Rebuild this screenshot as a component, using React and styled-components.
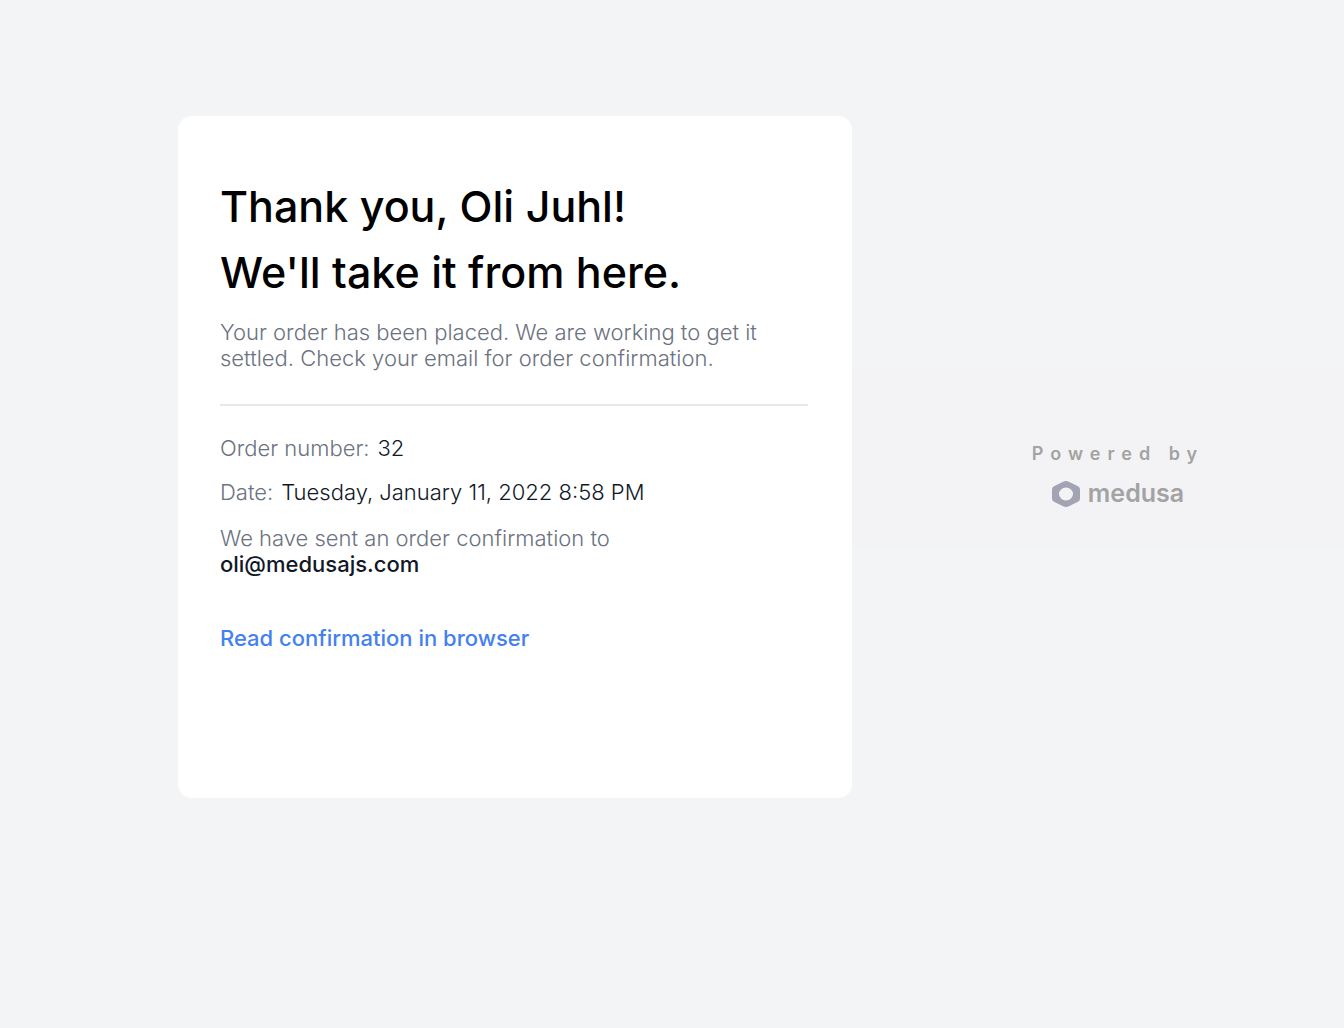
import styled, { createGlobalStyle } from "styled-components";

const GlobalStyle = createGlobalStyle`
  *, *::before, *::after {
    box-sizing: border-box;
  }

  body {
    margin: 0;
    background: #f3f4f6;
    color: #111827;
    font-family: Inter, "Liberation Sans", sans-serif;
    font-size: 22px;
    font-weight: 300;
    line-height: 26px;
  }
`;

const Page = styled.main`
  display: grid;
  grid-template-columns: 1.37fr 1fr;
  align-items: center;
  padding: 116px 0 116px 178px;
`;

const Card = styled.section`
  background: #ffffff;
  border-radius: 14px;
  padding: 57px 44px 147px 42px;
`;

const Title = styled.h1`
  margin: 0;
  color: #000000;
  font-size: 43px;
  font-weight: 500;
  line-height: 66px;
`;

const TitleLine = styled.span`
  display: block;
`;

const Text = styled.p`
  margin: ${(props) => props.$top}px 0 0;
  color: #6b7280;
`;

const Divider = styled.hr`
  height: 2px;
  margin: 33px 0 29px;
  border: none;
  background: #e5e7eb;
`;

const Details = styled.dl`
  display: flex;
  flex-direction: column;
  gap: 18px;
  margin: 0;
`;

const DetailRow = styled.div`
  display: flex;
  gap: 8px;
`;

const Label = styled.dt`
  color: #6b7280;
`;

const Value = styled.dd`
  margin: 0;
  color: #111827;
`;

const Email = styled.span`
  display: block;
  color: #111827;
  font-weight: 500;
`;

const ReadLink = styled.a`
  display: inline-block;
  margin-top: 48px;
  color: #4580f0;
  font-weight: 500;
  text-decoration: none;

  &:hover {
    text-decoration: underline;
  }
`;

const Powered = styled.aside`
  display: flex;
  flex-direction: column;
  align-items: center;
  gap: 12px;
  padding: 74px 0 40px 40px;
  background: #f3f3f5;
  color: #a3a3a3;
`;

const PoweredText = styled.span`
  font-size: 18px;
  font-weight: 600;
  line-height: 26px;
  letter-spacing: 7px;
`;

const Brand = styled.div`
  display: flex;
  align-items: flex-end;
  gap: 8px;
  font-size: 25px;
  font-weight: 600;
  line-height: 28px;
`;

function MedusaLogo() {
  return (
    <svg width="28" height="26" viewBox="0 0 28 26" aria-hidden="true">
      <path
        fill="#a2a3b3"
        fillRule="evenodd"
        d="M11.2 0.8Q14 -0.7 16.8 0.8L26 5.2Q28 6.3 28 8.5V17.5Q28 19.7 26 20.8L16.8 25.3Q14 26.7 11.2 25.3L2 20.8Q0 19.7 0 17.5V8.5Q0 6.3 2 5.2ZM14 6.6A7 6.4 0 1 0 14 19.4A7 6.4 0 1 0 14 6.6Z"
      />
    </svg>
  );
}

const order = {
  number: "32",
  date: "Tuesday, January 11, 2022 8:58 PM",
  customer: "Oli Juhl",
  email: "oli@medusajs.com",
};

function App() {
  return (
    <>
      <GlobalStyle />
      <Page>
        <Card>
          <Title>
            <TitleLine>Thank you, {order.customer}!</TitleLine>
            <TitleLine>We'll take it from here.</TitleLine>
          </Title>
          <Text $top={14}>
            Your order has been placed. We are working to get it settled. Check your email for order
            confirmation.
          </Text>
          <Divider />
          <Details>
            <DetailRow>
              <Label>Order number:</Label>
              <Value>{order.number}</Value>
            </DetailRow>
            <DetailRow>
              <Label>Date:</Label>
              <Value>{order.date}</Value>
            </DetailRow>
          </Details>
          <Text $top={20}>
            We have sent an order confirmation to
            <Email>{order.email}</Email>
          </Text>
          <ReadLink href="#confirmation">Read confirmation in browser</ReadLink>
        </Card>

        <Powered>
          <PoweredText>Powered by</PoweredText>
          <Brand>
            <MedusaLogo />
            medusa
          </Brand>
        </Powered>
      </Page>
    </>
  );
}

export default App;
